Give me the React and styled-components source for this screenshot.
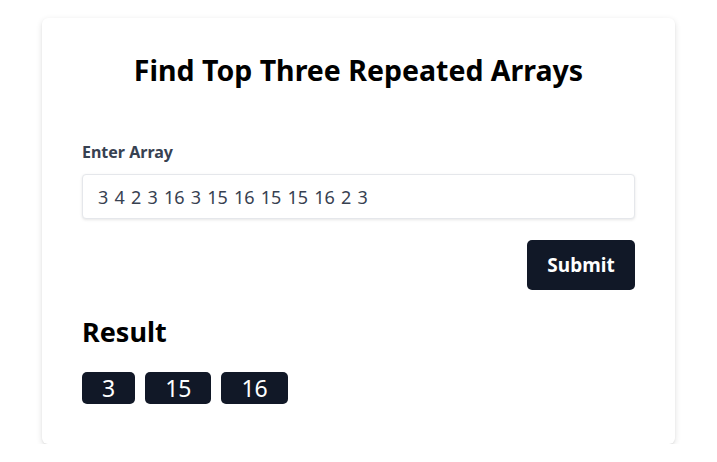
import React from "react";
import styled, { createGlobalStyle } from "styled-components";

const Global = createGlobalStyle`
  html, body { margin: 0; padding: 0; background: #ffffff; }
  body { font-family: "Noto Sans", "Open Sans", sans-serif; color: #000; }
  * { box-sizing: border-box; }
`;

const Page = styled.div`
  display: flex;
  justify-content: center;
  padding-top: 18px;
`;

const Card = styled.div`
  width: 633px;
  background: #fff;
  border-radius: 6px;
  box-shadow: 0 2px 6px rgba(0, 0, 0, 0.12), 0 1px 2px rgba(0, 0, 0, 0.06);
  padding: 32px 40px 40px;
  display: flex;
  flex-direction: column;
`;

const Title = styled.h1`
  margin: 0;
  text-align: center;
  font-size: 28.5px;
  font-weight: 700;
  line-height: 40px;
`;

const Label = styled.label`
  margin-top: 51px;
  font-size: 16px;
  font-weight: 700;
  color: #374151;
  line-height: 22px;
`;

const Input = styled.input`
  margin-top: 11px;
  height: 45px;
  width: 100%;
  border: 1px solid #e5e7eb;
  border-radius: 4px;
  box-shadow: 0 1px 3px rgba(0, 0, 0, 0.1);
  padding: 0 15px;
  font-family: inherit;
  font-size: 18px;
  word-spacing: 1.5px;
  color: #374151;
  outline: none;
`;

const Actions = styled.div`
  display: flex;
  justify-content: flex-end;
  margin-top: 21px;
`;

const SubmitButton = styled.button`
  height: 50px;
  width: 108px;
  background: #111827;
  color: #fff;
  border: none;
  border-radius: 5px;
  font-family: inherit;
  font-size: 19px;
  font-weight: 700;
`;

const ResultTitle = styled.h2`
  margin: 20px 0 0;
  font-size: 27px;
  font-weight: 700;
  line-height: 44px;
`;

const Badges = styled.div`
  display: flex;
  gap: 10px;
  margin-top: 18px;
`;

const Badge = styled.span`
  height: 32px;
  padding: 0 20px;
  background: #111827;
  color: #fff;
  border-radius: 5px;
  font-size: 23px;
  line-height: 32px;
`;

export default function App() {
  const results = [3, 15, 16];
  return (
    <>
      <Global />
      <Page>
        <Card>
          <Title>Find Top Three Repeated Arrays</Title>
          <Label htmlFor="arr">Enter Array</Label>
          <Input id="arr" defaultValue="3 4 2 3 16 3 15 16 15 15 16 2 3" />
          <Actions>
            <SubmitButton>Submit</SubmitButton>
          </Actions>
          <ResultTitle>Result</ResultTitle>
          <Badges>
            {results.map((r) => (
              <Badge key={r}>{r}</Badge>
            ))}
          </Badges>
        </Card>
      </Page>
    </>
  );
}
